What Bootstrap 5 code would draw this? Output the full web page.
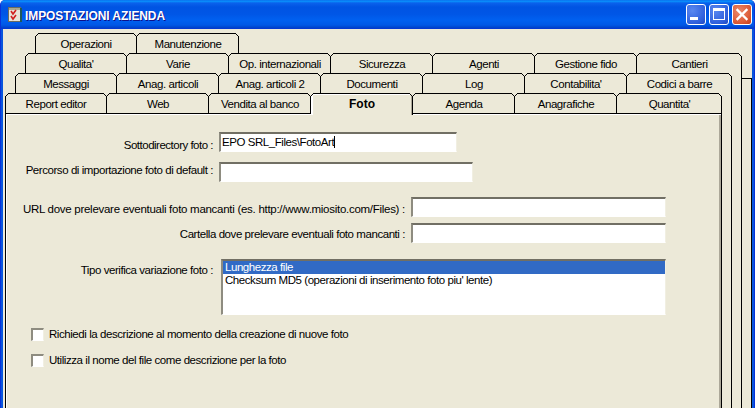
<!DOCTYPE html>
<html lang="it"><head><meta charset="utf-8"><title>Impostazioni azienda</title>
<link href="https://cdn.jsdelivr.net/npm/bootstrap@5.3.0/dist/css/bootstrap.min.css" rel="stylesheet">
<style>
html,body{height:408px;overflow:hidden;background:#fff}
body{font:11.5px/14px "Liberation Sans",Arial,sans-serif;letter-spacing:-.44px;color:#000}
.xpwin{height:408px;background:#0855dd;border-radius:5px 5px 0 0;overflow:hidden;border-left:1px solid #0831d9;border-right:1px solid #0831d9}
.xptitle{height:29px;margin:0 -1px;padding:0 3px 0 8px;background:linear-gradient(#0a5fe6 0,#0997ff 1px,#0a62ec 3px,#0054e3 7px,#0056e6 14px,#0060f0 20px,#0058e6 25px,#0040c8 28px,#0831d9 29px)}
.xptext{color:#fff;font:700 12px/14px "Liberation Sans",Arial,sans-serif;letter-spacing:-.1px;margin:2px 0 0 3px;text-shadow:1px 1px 0 #0f1089}
.xpbtn{width:20px;height:21px;padding:0;margin-left:3px;border:1px solid #fff;border-radius:3px;background:radial-gradient(circle at 30% 30%,#5a88f0,#2f5fdc 70%,#2048c0);display:block}
.xpbtn.xpclose{background:radial-gradient(circle at 35% 35%,#ec8a6c,#dc5a36 65%,#c13a1c)}
.xpbtn svg{display:block}
.xpclient{height:379px;margin:0 2px;background:#ECE9D8;padding:4px 0 0 2px}
.tabrow{height:20px;flex-wrap:nowrap}
.tabrow.r4{margin-left:30px}.tabrow.r3{margin-left:20px}.tabrow.r2{margin-left:10px}
a.nav-link.tabx{width:102px;height:20px;padding:3px 0 0;margin:0;color:#000;background:#ECE9D8;border-top:1px solid #000;border-left:1px solid #000;border-right:1px solid #000;text-align:center;position:relative;font-size:11.5px;line-height:14px;box-sizing:border-box;flex:none;white-space:nowrap}
a.nav-link.tabx+a.nav-link.tabx{border-left:0;padding-left:1px}
a.nav-link.tabx.tabend{flex:1 1 auto;width:auto;border-right:0;padding-left:3px}
a.nav-link.tabx::before,a.nav-link.tabx::after{content:"";position:absolute;top:-1px;width:4px;height:4px}
a.nav-link.tabx::before{left:-1px;background:linear-gradient(135deg,#ECE9D8 0 38%,#000 38% 62%,transparent 62%)}
a.nav-link.tabx::after{right:-1px;background:linear-gradient(225deg,#ECE9D8 0 38%,#000 38% 62%,transparent 62%)}
a.nav-link.tabx.tabon{height:22px;z-index:2;font:700 12px/15px "Liberation Sans",Arial,sans-serif;letter-spacing:0;padding-top:3px;border-left:0;border-right:1px solid #000;box-shadow:inset 2px 0 0 #fff,inset 0 1px 0 #fff,inset -1px 0 0 #aca899;margin-bottom:-2px}
.tier{border-right:1px solid #000}
.tiermid{margin-right:9px}
.stripe{width:10px;margin-top:25px;border-top:1px solid #000;border-right:1px solid #000;flex:none}
.pagebox{border-top:1px solid #000;border-left:1px solid #000;box-shadow:inset 1px 1px 0 #fff,inset -2px 0 0 #aca899;position:relative}
.frow{display:flex;align-items:flex-start}
.lbl-a{width:207px}.lbl-b{width:399px}
.lbl-a,.lbl-b{text-align:right;margin-right:6px;white-space:nowrap}
.lbl-url{letter-spacing:-.28px}
.lbl-first{letter-spacing:-.5px}
.sunk{height:20px;border-radius:0;padding:0 0 0 1px;font-size:11.5px;line-height:17px;color:#000;background:#fff;border-style:solid;border-width:2px 1px 1px 2px;border-color:#716f64 #f1efe2 #fff #8e8c80;box-shadow:none;min-height:0}
.w238{width:238px}.w254{width:254px}.w255{width:255px}
.caretbar{border-right:1px solid #000;padding-right:0}
.r1{margin-top:18px}.r2x{margin-top:10px}.r3x{margin-top:15px}.r4x{margin-top:6px}.r5x{margin-top:16px}.r6x{margin-top:13px}
.lift3{padding-top:6px}.lift1{padding-top:1px}.lift0{padding-top:4px}.lift5{padding-top:5px}.liftl{padding-top:4px}
.xplist{width:445px;height:56px;margin-left:2px;border-radius:0;background:#fff;border-style:solid;border-width:2px 1px 1px 2px;border-color:#716f64 #f1efe2 #fff #8e8c80;display:block}
.xplist .list-group-item{padding:0 0 0 2px;border:0;border-radius:0;font-size:11.5px;line-height:13px;height:13px;color:#000;background:#fff}
.xplist .list-group-item.active{background:#316ac5;color:#fff}
.chkrow{margin-left:25px;display:flex;align-items:center;height:13px;margin-bottom:0;padding:0;min-height:0}
.chkrow .form-check-input{width:13px;height:13px;margin:0 5px 0 0;float:none;border-radius:0;background:#fff;border-style:solid;border-width:2px 1px 1px 2px;border-color:#8e8c80 #f1efe2 #fff #8e8c80;box-shadow:none}
.chkrow .form-check-label{line-height:14px;margin-bottom:2px}
</style></head>
<body>
<div class="xpwin">
 <div class="xptitle d-flex align-items-center">
  <svg width="14" height="15" viewBox="0 0 14 15" aria-hidden="true"><rect x="0.5" y="0.5" width="12" height="14" fill="#e8e4d8" stroke="#6b6b60"/><rect x="12" y="1" width="2" height="14" fill="#1f5a5a"/><rect x="1" y="1" width="11" height="2" fill="#a8a890"/><path d="M3 4l2 3 3-4M3 9l2 3 3-4" fill="none" stroke="#d02020" stroke-width="1.6"/></svg>
  <span class="xptext">IMPOSTAZIONI AZIENDA</span>
  <span class="d-flex ms-auto">
   <span class="xpbtn"><svg width="18" height="19" viewBox="0 0 18 19" aria-hidden="true"><rect x="3" y="12" width="8" height="3" fill="#fff"/></svg></span>
   <span class="xpbtn"><svg width="18" height="19" viewBox="0 0 18 19" aria-hidden="true"><path d="M3 3h12v12H3z M4 6v8h10V6z" fill="#fff" fill-rule="evenodd"/></svg></span>
   <span class="xpbtn xpclose"><svg width="18" height="19" viewBox="0 0 18 19" aria-hidden="true"><path d="M4.5 5l9 9M13.5 5l-9 9" stroke="#fff" stroke-width="2.4" stroke-linecap="square"/></svg></span>
  </span>
 </div>
 <div class="xpclient">
  <div class="nav tabrow r4">
   <a class="nav-link tabx" href="#">Operazioni</a><a class="nav-link tabx" href="#">Manutenzione</a>
  </div>
  <div class="d-flex" style="height:355px">
   <div class="tier flex-fill d-flex flex-column">
    <div class="nav tabrow r3">
     <a class="nav-link tabx" href="#">Qualita'</a><a class="nav-link tabx" href="#">Varie</a><a class="nav-link tabx" href="#">Op. internazionali</a><a class="nav-link tabx" href="#">Sicurezza</a><a class="nav-link tabx" href="#">Agenti</a><a class="nav-link tabx" href="#">Gestione fido</a><a class="nav-link tabx tabend" href="#">Cantieri</a>
    </div>
    <div class="tier tiermid flex-fill d-flex flex-column">
     <div class="nav tabrow r2">
      <a class="nav-link tabx" href="#">Messaggi</a><a class="nav-link tabx" href="#">Anag. articoli</a><a class="nav-link tabx" href="#">Anag. articoli 2</a><a class="nav-link tabx" href="#">Documenti</a><a class="nav-link tabx" href="#">Log</a><a class="nav-link tabx" href="#">Contabilita'</a><a class="nav-link tabx tabend" href="#">Codici a barre</a>
     </div>
     <div class="tier tiermid flex-fill d-flex flex-column">
      <div class="nav tabrow">
       <a class="nav-link tabx" href="#">Report editor</a><a class="nav-link tabx" href="#">Web</a><a class="nav-link tabx" href="#">Vendita al banco</a><a class="nav-link tabx tabon" href="#">Foto</a><a class="nav-link tabx" href="#">Agenda</a><a class="nav-link tabx" href="#">Anagrafiche</a><a class="nav-link tabx tabend" href="#">Quantita'</a>
      </div>
      <div class="pagebox flex-fill">
       <div class="frow r1"><label class="lbl-a lbl-first lift3">Sottodirectory foto :</label><div class="form-control sunk w238"><span class="caretbar">EPO SRL_Files\FotoArt</span></div></div>
       <div class="frow r2x"><label class="lbl-a lift1">Percorso di importazione foto di default :</label><input class="form-control sunk w254" type="text"></div>
       <div class="frow r3x"><label class="lbl-b lbl-url lift5">URL dove prelevare eventuali foto mancanti (es. http://www.miosito.com/Files) :</label><input class="form-control sunk w255" type="text"></div>
       <div class="frow r4x"><label class="lbl-b lift0">Cartella dove prelevare eventuali foto mancanti :</label><input class="form-control sunk w255" type="text"></div>
       <div class="frow r5x"><label class="lbl-a liftl">Tipo verifica variazione foto :</label>
        <div class="list-group xplist"><div class="list-group-item active">Lunghezza file</div><div class="list-group-item">Checksum MD5 (operazioni di inserimento foto piu' lente)</div></div></div>
       <div class="form-check chkrow r6x"><input class="form-check-input" type="checkbox" id="c1"><label class="form-check-label" for="c1">Richiedi la descrizione al momento della creazione di nuove foto</label></div>
       <div class="form-check chkrow r6x"><input class="form-check-input" type="checkbox" id="c2"><label class="form-check-label" for="c2">Utilizza il nome del file come descrizione per la foto</label></div>
      </div>
     </div>
    </div>
   </div>
   <div class="stripe"></div>
  </div>
 </div>
</div>
</body></html>
